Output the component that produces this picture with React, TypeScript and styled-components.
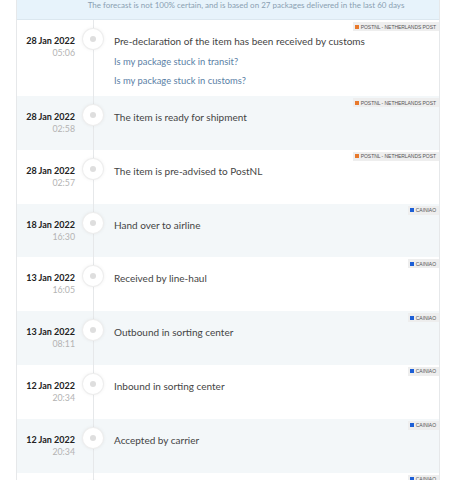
import React from 'react';
import styled, { createGlobalStyle } from 'styled-components';

const GlobalStyle = createGlobalStyle`
  html, body {
    margin: 0;
    padding: 0;
    background: #ffffff;
  }
  body {
    font-family: Lato, "Open Sans", sans-serif;
    -webkit-font-smoothing: antialiased;
  }
`;

const Panel = styled.div`
  margin-left: 16px;
  width: 424px;
  border-left: 1px solid #e6e8ea;
  border-right: 1px solid #e6e8ea;
  box-sizing: border-box;
`;

const Forecast = styled.div`
  height: 20px;
  box-sizing: border-box;
  padding-left: 36px;
  background: #e7f3fb;
  border-bottom: 1px solid #dbe7ef;
  color: #8a9fb2;
  font-size: 8px;
  text-align: center;
  line-height: 10px;
`;

const Row = styled.div<{ $tinted: boolean }>`
  position: relative;
  display: grid;
  grid-template-columns: 58px 36px 1fr;
  min-height: 53.8px;
  box-sizing: border-box;
  background: ${p => (p.$tinted ? '#f3f7f9' : '#ffffff')};
`;

const DateCol = styled.div`
  text-align: right;
  padding-top: 15px;
`;

const DateText = styled.div`
  font-size: 9px;
  font-weight: 700;
  color: #222;
  line-height: 12px;
`;

const TimeText = styled.div`
  font-size: 8.8px;
  color: #b3b3b3;
  line-height: 11px;
`;

const Track = styled.div`
  position: relative;
  display: flex;
  justify-content: center;

  &::before {
    content: '';
    position: absolute;
    top: 0;
    bottom: 0;
    left: 50%;
    width: 1px;
    background: #e6e8ea;
  }
`;

const Node = styled.div`
  position: relative;
  margin-top: 9px;
  width: 20px;
  height: 20px;
  border-radius: 50%;
  background: #fff;
  box-shadow: 0 0 0 1px #eeeeee, 0 0 4px rgba(0, 0, 0, 0.1);
  display: flex;
  align-items: center;
  justify-content: center;

  &::after {
    content: '';
    width: 6px;
    height: 6px;
    border-radius: 50%;
    background: #dedede;
  }
`;

const Content = styled.div`
  padding: 14px 0 8px 3px;
`;

const Title = styled.div`
  font-size: 10px;
  color: #444;
  line-height: 14px;
`;

const Help = styled.a`
  display: block;
  margin-top: 5px;
  font-size: 9.4px;
  line-height: 14px;
  color: #5b7fa6;
  text-decoration: none;

  &:first-of-type {
    margin-top: 7px;
  }
`;

const Carrier = styled.div`
  position: absolute;
  top: 2px;
  right: 0;
  height: 9px;
  padding: 0 3px 0 2px;
  background: #eeeeee;
  display: flex;
  align-items: center;
  gap: 2px;
  font-family: "Liberation Sans", Arial, sans-serif;
  font-size: 5px;
  color: #555;
  text-transform: uppercase;
  letter-spacing: -0.05px;
`;

const Flag = styled.span<{ $color: string }>`
  width: 4px;
  height: 4px;
  background: ${p => p.$color};
`;

type Event = {
  date: string;
  time: string;
  text: string;
  carrier: 'postnl' | 'cainiao';
  links?: string[];
};

const CARRIERS = {
  postnl: { label: 'PostNL - Netherlands Post', color: '#e8792c' },
  cainiao: { label: 'Cainiao', color: '#1d5fd6' },
};

const EVENTS: Event[] = [
  {
    date: '28 Jan 2022',
    time: '05:06',
    text: 'Pre-declaration of the item has been received by customs',
    carrier: 'postnl',
    links: ['Is my package stuck in transit?', 'Is my package stuck in customs?'],
  },
  { date: '28 Jan 2022', time: '02:58', text: 'The item is ready for shipment', carrier: 'postnl' },
  { date: '28 Jan 2022', time: '02:57', text: 'The item is pre-advised to PostNL', carrier: 'postnl' },
  { date: '18 Jan 2022', time: '16:30', text: 'Hand over to airline', carrier: 'cainiao' },
  { date: '13 Jan 2022', time: '16:05', text: 'Received by line-haul', carrier: 'cainiao' },
  { date: '13 Jan 2022', time: '08:11', text: 'Outbound in sorting center', carrier: 'cainiao' },
  { date: '12 Jan 2022', time: '20:34', text: 'Inbound in sorting center', carrier: 'cainiao' },
  { date: '12 Jan 2022', time: '20:34', text: 'Accepted by carrier', carrier: 'cainiao' },
  { date: '12 Jan 2022', time: '20:30', text: 'Departure from outward office of exchange', carrier: 'cainiao' },
];

export default function App() {
  return (
    <>
      <GlobalStyle />
      <Panel>
        <Forecast>
          The forecast is not 100% certain, and is based on 27 packages delivered in the last 60 days
        </Forecast>
        {EVENTS.map((ev, i) => {
          const c = CARRIERS[ev.carrier];
          return (
            <Row key={i} $tinted={i % 2 === 1}>
              <Carrier>
                <Flag $color={c.color} />
                {c.label}
              </Carrier>
              <DateCol>
                <DateText>{ev.date}</DateText>
                <TimeText>{ev.time}</TimeText>
              </DateCol>
              <Track>
                <Node />
              </Track>
              <Content>
                <Title>{ev.text}</Title>
                {ev.links?.map(l => (
                  <Help key={l} href="#">{l}</Help>
                ))}
              </Content>
            </Row>
          );
        })}
      </Panel>
    </>
  );
}
